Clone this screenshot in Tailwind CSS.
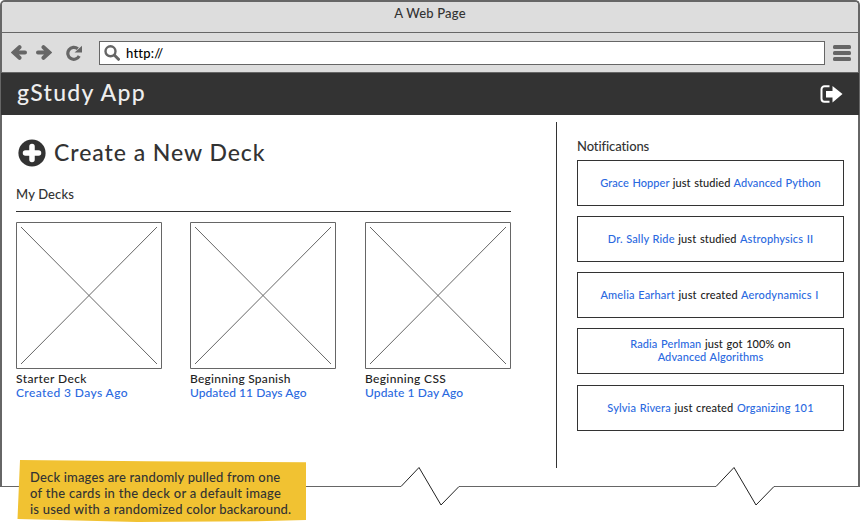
<!DOCTYPE html>
<html lang="en">
<head>
<meta charset="utf-8">
<title>gStudy App</title>
<script src="https://cdn.jsdelivr.net/npm/@tailwindcss/browser@4"></script>
</head>
<body class="bg-white">
<div class="relative h-[524px] w-[860px] overflow-hidden font-['Lato',sans-serif] font-medium text-[#333]">
  <div class="flex h-[487px] flex-col rounded-t-[5px] border-x-2 border-t-2 border-[#666]">
    <header class="flex h-[31px] shrink-0 justify-center rounded-t-[3px] border-b border-[#666] bg-[#ddd] pt-[2px]">
      <h1 class="text-[13px] leading-[18px] tracking-[0.2px] whitespace-nowrap">A Web Page</h1>
    </header>
    <div class="flex h-10 shrink-0 items-center border-b border-[#666] bg-[#ddd] pl-[9px] pr-[7px]">
      <svg class="h-[15px] w-4 shrink-0" viewBox="0 0 16 15" fill="none" stroke="#666" stroke-width="4" stroke-linecap="round"><path d="M8.500 2.200 2.800 7.500l5.700 5.300M4 7.500h10"/></svg>
      <svg class="ml-[9px] h-[15px] w-4 shrink-0" viewBox="0 0 16 15" fill="none" stroke="#666" stroke-width="4" stroke-linecap="round"><path d="M7.500 2.200 13.200 7.500l-5.700 5.300M12 7.500H2"/></svg>
      <svg class="ml-[14px] h-4 w-4 shrink-0" viewBox="0 0 16 16"><path d="M11.800 3.800A6 6 0 1 0 13.200 11" fill="none" stroke="#666" stroke-width="3.200"/><path d="M16 .800v6.700H8.600z" fill="#666"/></svg>
      <div class="ml-[17px] flex h-6 w-[726px] shrink-0 items-center border border-[#666] bg-white pl-1">
        <svg class="h-4 w-4 shrink-0" viewBox="0 0 16 16" fill="none" stroke="#666"><circle cx="6.500" cy="6.300" r="5" stroke-width="2.400"/><path d="m10.500 10.300 4 4" stroke-width="3" stroke-linecap="round"/></svg>
        <span class="ml-[6px] text-[13px] leading-4 tracking-[0.2px] text-black">http://</span>
      </div>
      <svg class="ml-[8px] h-4 w-[18px] shrink-0" viewBox="0 0 18 16" fill="#666"><rect y="0" width="18" height="4" rx="1.500"/><rect y="6" width="18" height="4" rx="1.500"/><rect y="12" width="18" height="4" rx="1.500"/></svg>
    </div>
    <div class="-mx-px flex h-[42px] shrink-0 items-center justify-between bg-[#333] pl-4 pr-4 text-white">
      <h2 class="relative -top-[2px] text-[23px] leading-7 tracking-[1.3px] whitespace-nowrap text-[#eee]">gStudy App</h2>
      <svg class="h-[18px] w-[23px]" viewBox="0 0 23 18"><path d="M9.500 1.300H4.500a3 3 0 0 0-3 3v9.400a3 3 0 0 0 3 3h5" fill="none" stroke="#fff" stroke-width="2"/><path d="M6 6h6.500V1L22.500 9l-10 8.500V12.500H6z" fill="#fff"/></svg>
    </div>
    <main class="flex flex-1 pl-[14px]">
      <section class="w-[495px]">
        <div class="mt-[24px] flex h-7 items-center pl-[2px]">
          <svg class="h-7 w-7" viewBox="0 0 28 28"><circle cx="14" cy="14" r="13.600" fill="#333"/><path d="M14 7.500v13M7.500 14h13" stroke="#fff" stroke-width="5.500" stroke-linecap="round"/></svg>
          <h2 class="-mt-[2px] ml-[8px] text-[23px] leading-7 tracking-[0.95px] whitespace-nowrap">Create a New Deck</h2>
        </div>
        <h3 class="mt-[18px] h-[27px] border-b border-[#333] text-[13px] leading-[18px] tracking-[0.15px]">My Decks</h3>
        <div class="mt-[10px] grid grid-cols-[174px_175px_146px] text-[12px] leading-[14px] whitespace-nowrap">
          <article>
            <svg class="block h-[147px] w-[146px]" viewBox="0 0 146 147" fill="none" stroke="#666"><path d="M.5.5h145v146H.5zM5 5l136 137M141 5 5 142"/></svg>
            <p class="mt-[3px] tracking-[0.4px] text-[#222]">Starter Deck</p><p class="tracking-[0.4px] text-[#2a69e0]">Created 3 Days Ago</p>
          </article>
          <article>
            <svg class="block h-[147px] w-[146px]" viewBox="0 0 146 147" fill="none" stroke="#666"><path d="M.5.5h145v146H.5zM5 5l136 137M141 5 5 142"/></svg>
            <p class="mt-[3px] tracking-[0.26px] text-[#222]">Beginning Spanish</p><p class="tracking-[0.07px] text-[#2a69e0]">Updated 11 Days Ago</p>
          </article>
          <article>
            <svg class="block h-[147px] w-[146px]" viewBox="0 0 146 147" fill="none" stroke="#666"><path d="M.5.5h145v146H.5zM5 5l136 137M141 5 5 142"/></svg>
            <p class="mt-[3px] tracking-[0.35px] text-[#222]">Beginning CSS</p><p class="tracking-[0.12px] text-[#2a69e0]">Update 1 Day Ago</p>
          </article>
        </div>
      </section>
      <aside class="ml-[45px] mt-[7px] h-[346px] w-[288px] border-l border-[#333] pl-5 pt-[15px]">
        <h3 class="text-[13px] leading-[18px] tracking-[-0.1px]">Notifications</h3>
        <ul class="mt-[5px] flex flex-col gap-[10px] text-center text-[11px] leading-[13px] tracking-[0.1px] whitespace-nowrap text-[#222] [word-spacing:0.7px]">
          <li class="flex h-[46px] items-center justify-center border border-[#333] pb-[2px]"><p class="tracking-[0.06px]"><a class="text-[#2a69e0]">Grace Hopper</a> just studied <a class="text-[#2a69e0]">Advanced Python</a></p></li>
          <li class="flex h-[46px] items-center justify-center border border-[#333] pb-[2px]"><p class="tracking-[0.13px]"><a class="text-[#2a69e0]">Dr. Sally Ride</a> just studied <a class="text-[#2a69e0]">Astrophysics II</a></p></li>
          <li class="flex h-[46px] items-center justify-center border border-[#333] pr-[2px] pb-[2px]"><p class="tracking-[0.16px]"><a class="text-[#2a69e0]">Amelia Earhart</a> just created <a class="text-[#2a69e0]">Aerodynamics I</a></p></li>
          <li class="flex h-[46px] items-center justify-center border border-[#333] pb-[2px]"><p class="tracking-[0.1px]"><a class="text-[#2a69e0]">Radia Perlman</a> just got 100% on<br><a class="text-[#2a69e0]">Advanced Algorithms</a></p></li>
          <li class="mt-px flex h-[46px] items-center justify-center border border-[#333] pb-[2px]"><p class="tracking-[0.13px]"><a class="text-[#2a69e0]">Sylvia Rivera</a> just created <a class="text-[#2a69e0]">Organizing 101</a></p></li>
        </ul>
      </aside>
    </main>
  </div>
  <!-- torn bottom edge of the browser frame -->
  <svg class="absolute left-0 top-[460px] h-[50px] w-[860px]" viewBox="0 0 860 50" fill="none">
    <path d="M401 26.500h58M716 26.500h58" stroke="#fff"/>
    <path d="M0 26.500h401M459 26.500h257M774 26.500h86" stroke="#666"/>
    <path d="m401 26.500 18-19 22 37.500 18-18.500M716 26.500l18-19 22 37.500 18-18.500" stroke="#222"/>
  </svg>
  <!-- sticky note -->
  <div class="absolute left-[17px] top-[459px] h-[64px] w-[290px]">
    <svg class="absolute inset-0 h-full w-full" viewBox="0 0 290 64" fill="#f1c232"><path d="M3 1 130 2.300l159 1V61L240 62.300 120 63 .500 60z"/></svg>
    <p class="relative pl-[13px] pt-[10px] text-[13px] leading-4 whitespace-nowrap"><span class="block tracking-[0.16px]">Deck images are randomly pulled from one</span><span class="block tracking-[0.28px]">of the cards in the deck or a default image</span><span class="block tracking-[0.2px]">is used with a randomized color backaround.</span></p>
  </div>
</div>
</body>
</html>
